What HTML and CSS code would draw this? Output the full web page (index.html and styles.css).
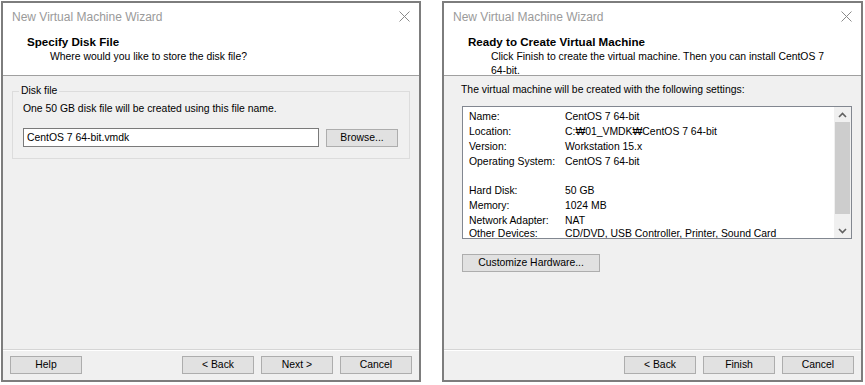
FILE: index.html
```html
<!DOCTYPE html>
<html lang="en">
<head>
    <meta charset="UTF-8">
    <title>New Virtual Machine Wizard</title>
    <link rel="stylesheet" href="styles.css">
</head>
<body>
    <!-- 디스크 파일 지정 -->
    <div class="window win-left">
        <div class="titlebar">
            <span class="title">New Virtual Machine Wizard</span>
            <svg class="close" width="11" height="11" viewBox="0 0 11 11"><path d="M0.5 0.5 L10.5 10.5 M10.5 0.5 L0.5 10.5" stroke="#8a8a8a" stroke-width="1" fill="none"/></svg>
        </div>
        <div class="header">
            <div class="head-title">Specify Disk File</div>
            <div class="head-sub">Where would you like to store the disk file?</div>
        </div>
        <div class="content">
            <fieldset class="group">
                <legend>Disk file</legend>
                <div class="group-text">One 50 GB disk file will be created using this file name.</div>
                <div class="file-row">
                    <div class="textbox">CentOS 7 64-bit.vmdk</div>
                    <button class="btn btn-browse">Browse...</button>
                </div>
            </fieldset>
        </div>
        <div class="footer">
            <button class="btn">Help</button>
            <span class="spacer"></span>
            <button class="btn">&lt; Back</button>
            <button class="btn">Next &gt;</button>
            <button class="btn">Cancel</button>
        </div>
    </div>

    <!-- 가상 머신 생성 준비 -->
    <div class="window win-right">
        <div class="titlebar">
            <span class="title">New Virtual Machine Wizard</span>
            <svg class="close" width="11" height="11" viewBox="0 0 11 11"><path d="M0.5 0.5 L10.5 10.5 M10.5 0.5 L0.5 10.5" stroke="#8a8a8a" stroke-width="1" fill="none"/></svg>
        </div>
        <div class="header">
            <div class="head-title">Ready to Create Virtual Machine</div>
            <div class="head-sub">Click Finish to create the virtual machine. Then you can install CentOS 7<br>64-bit.</div>
        </div>
        <div class="content content-right">
            <div class="intro">The virtual machine will be created with the following settings:</div>
            <div class="listbox">
                <div class="rows">
                    <div class="row"><span class="key">Name:</span><span>CentOS 7 64-bit</span></div>
                    <div class="row"><span class="key">Location:</span><span>C:₩01_VMDK₩CentOS 7 64-bit</span></div>
                    <div class="row"><span class="key">Version:</span><span>Workstation 15.x</span></div>
                    <div class="row"><span class="key">Operating System:</span><span>CentOS 7 64-bit</span></div>
                    <div class="row"></div>
                    <div class="row"><span class="key">Hard Disk:</span><span>50 GB</span></div>
                    <div class="row"><span class="key">Memory:</span><span>1024 MB</span></div>
                    <div class="row"><span class="key">Network Adapter:</span><span>NAT</span></div>
                    <div class="row row-last"><span class="key">Other Devices:</span><span>CD/DVD, USB Controller, Printer, Sound Card</span></div>
                </div>
                <div class="scrollbar">
                    <div class="arrow">
                        <svg width="9" height="6" viewBox="0 0 9 6"><path d="M1 5 L4.5 1.5 L8 5" stroke="#606060" stroke-width="1.6" fill="none"/></svg>
                    </div>
                    <div class="thumb"></div>
                    <div class="track"></div>
                    <div class="arrow">
                        <svg width="9" height="6" viewBox="0 0 9 6"><path d="M1 1 L4.5 4.5 L8 1" stroke="#606060" stroke-width="1.6" fill="none"/></svg>
                    </div>
                </div>
            </div>
            <button class="btn btn-custom">Customize Hardware...</button>
        </div>
        <div class="footer">
            <span class="spacer"></span>
            <button class="btn">&lt; Back</button>
            <button class="btn">Finish</button>
            <button class="btn">Cancel</button>
        </div>
    </div>
</body>
</html>
```

FILE: styles.css
```css
body {
    margin: 0;
    padding: 1px 0 0 1px;
    display: flex;
    gap: 21px;
    background-color: #ffffff;
    font-family: "Liberation Sans", "Noto Sans CJK KR", sans-serif;
    font-size: 10.4px;
    color: #000000;
}

.window {
    height: 377px;
    border: 2px solid #7d7d7d;
    background-color: #f0f0f0;
    display: flex;
    flex-direction: column;
}

.win-left {
    width: 416px;
}

.win-right {
    width: 417px;
}

/* 제목 표시줄 */
.titlebar {
    height: 27px;
    background-color: #ffffff;
    display: flex;
    align-items: center;
    justify-content: space-between;
    padding: 0 9px 0 9px;
}

.title {
    color: #9a9a9a;
    font-size: 12px;
}

.header {
    background-color: #ffffff;
    border-bottom: 1px solid #a0a0a0;
    padding: 5px 0 0 24px;
    box-sizing: border-box;
    height: 46px;
    line-height: 14px;
}

.head-title {
    font-weight: bold;
    font-size: 11.6px;
}

.head-sub {
    padding-left: 23px;
    padding-top: 1px;
    white-space: nowrap;
}

.content {
    flex: 1;
    padding: 8px 9px 0 9px;
}

/* 그룹 상자 */
.group {
    margin: 0;
    border: 1px solid #dcdcdc;
    padding: 0 10px 11px 10px;
    line-height: 14px;
}

.group legend {
    padding: 0 2px;
    margin-left: -4px;
}

.group-text {
    margin-top: 4px;
}

.file-row {
    display: flex;
    align-items: center;
    gap: 7px;
    margin-top: 12px;
}

.textbox {
    width: 296px;
    height: 19px;
    box-sizing: border-box;
    background-color: #ffffff;
    border: 1px solid #7a7a7a;
    padding: 1px 3px;
    line-height: 15px;
}

.btn {
    font-family: inherit;
    font-size: 10.4px;
    color: #000000;
    background-color: #e1e1e1;
    border: 1px solid #adadad;
    height: 18px;
    width: 72px;
    padding: 0;
    line-height: 14px;
}

.footer {
    height: 31px;
    border-top: 1px solid #d5d5d5;
    box-shadow: inset 0 1px 0 #ffffff;
    box-sizing: border-box;
    display: flex;
    align-items: flex-start;
    gap: 7px;
    padding: 6px 7px 0 7px;
}

.spacer {
    flex: 1;
}

/* 설정 목록 */
.content-right {
    padding: 7px 9px 0 16px;
    line-height: 14px;
}

.intro {
    margin-left: 1px;
}

.listbox {
    margin-top: 9px;
    margin-left: 2px;
    height: 133px;
    box-sizing: border-box;
    border: 1px solid #828790;
    background-color: #ffffff;
    display: flex;
    overflow: hidden;
}

.rows {
    flex: 1;
    padding: 3px 0 0 6px;
    overflow: hidden;
}

.row {
    height: 14.85px;
    line-height: 14.85px;
    white-space: nowrap;
}

.row-last {
    height: 9px;
    line-height: 9px;
}

.key {
    display: inline-block;
    width: 96px;
}

.scrollbar {
    width: 17px;
    background-color: #f0f0f0;
    display: flex;
    flex-direction: column;
}

.arrow {
    height: 15px;
    display: flex;
    align-items: center;
    justify-content: center;
}

.thumb {
    height: 92px;
    margin: 0 1px;
    background-color: #cdcdcd;
}

.track {
    flex: 1;
}

.btn-custom {
    width: 138px;
    margin-top: 15px;
    margin-left: 2px;
}
```
